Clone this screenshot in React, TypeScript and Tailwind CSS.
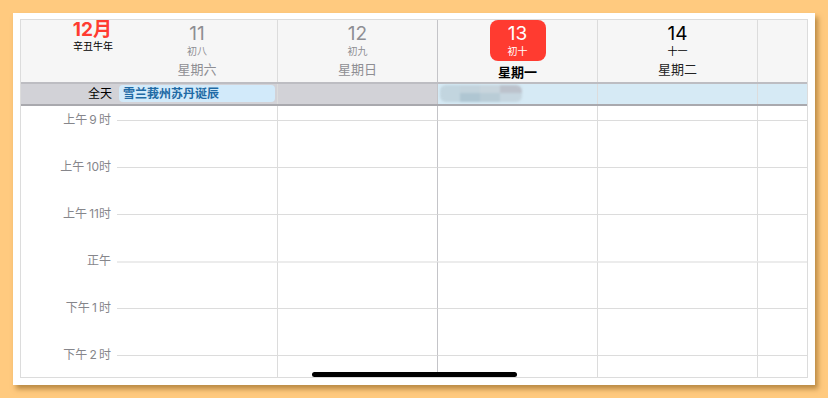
import React from "react";

const FONT = { fontFamily: 'Inter, "Noto Sans CJK SC", "Noto Sans", sans-serif' };

type Day = { n: string; lunar: string; week: string; kind: "past" | "today" | "future" };
const days: Day[] = [
  { n: "11", lunar: "初八", week: "星期六", kind: "past" },
  { n: "12", lunar: "初九", week: "星期日", kind: "past" },
  { n: "13", lunar: "初十", week: "星期一", kind: "today" },
  { n: "14", lunar: "十一", week: "星期二", kind: "future" },
];

const hours = [
  "上午\u20099\u2009时",
  "上午\u200910时",
  "上午\u200911时",
  "正午",
  "下午\u20091\u2009时",
  "下午\u20092\u2009时",
];

function colCls(i: number) {
  if (i === 0) return "w-[160px] shrink-0";
  if (i === 2) return "w-[160px] shrink-0 border-l border-[#c4c4c8]";
  if (i === 4) return "flex-1 border-l border-[#dcdcdc]";
  return "w-[160px] shrink-0 border-l border-[#dcdcdc]";
}

export default function App() {
  return (
    <div className="w-[828px] h-[398px] bg-[#ffca7f] p-[13px]" style={FONT}>
      <div className="relative w-[802px] h-[372px] bg-white pt-[6px] px-[7px] shadow-[3px_4px_5px_rgba(130,85,20,0.55)]">
        <div className="w-[788px] h-[359px] border border-[#dcdcdc] flex flex-col overflow-hidden">
          {/* header */}
          <div className="h-[62px] flex bg-[#f6f6f6] shrink-0">
            <div className="w-[96px] shrink-0 flex flex-col items-end pr-[4px]">
              <div className="text-[#ff3b30] font-bold text-[19px] leading-[20px] pr-[1px]">12月</div>
              <div className="text-[10px] leading-[12px] text-black">辛丑牛年</div>
            </div>
            {[0, 1, 2, 3, 4].map((i) => {
              const d = days[i];
              return (
                <div key={i} className={colCls(i) + " flex flex-col items-center"}>
                  {d && d.kind === "today" && (
                    <>
                      <div className="w-[56px] h-[41px] bg-[#ff3b30] rounded-[8px] flex flex-col items-center">
                        <div className="text-white text-[19px] leading-[20px] mt-[4px]">{d.n}</div>
                        <div className="text-white text-[10px] leading-[12px] mt-[1px]">{d.lunar}</div>
                      </div>
                      <div className="text-black font-bold text-[13px] leading-[16px] mt-[3px]">{d.week}</div>
                    </>
                  )}
                  {d && d.kind !== "today" && (
                    <>
                      <div className={(d.kind === "past" ? "text-[#8e8e93]" : "text-black") + " text-[19px] leading-[20px] mt-[4px]"}>{d.n}</div>
                      <div className={(d.kind === "past" ? "text-[#8e8e93]" : "text-black") + " text-[10px] leading-[12px] mt-[1px]"}>{d.lunar}</div>
                      <div className={(d.kind === "past" ? "text-[#8e8e93]" : "text-[#222]") + " text-[13px] leading-[16px] mt-[4px]"}>{d.week}</div>
                    </>
                  )}
                </div>
              );
            })}
          </div>
          {/* all-day */}
          <div className="h-[24px] flex shrink-0 bg-[#d2d2d7] border-t-2 border-t-[#bdbdc2] border-b-2 border-b-[#a9a9ae]">
            <div className="w-[96px] shrink-0 flex items-center justify-end pr-[5px] text-[12px] text-black">全天</div>
            <div className={colCls(0) + " px-[2px] pt-[1px]"}>
              <div className="h-[17px] rounded-[4px] bg-[#d2eafa] flex items-center px-[4px] text-[12px] font-semibold text-[#1f6aa5] leading-none">
                雪兰莪州苏丹诞辰
              </div>
            </div>
            <div className={colCls(1)}></div>
            <div className={colCls(2) + " bg-[#d6eaf5] pt-[1px]"}>
              <div className="ml-[2px] w-[82px] h-[17px] flex blur-[1.2px] rounded-[6px] overflow-hidden">
                <div className="w-[20px] bg-[#c2d5df]"></div>
                <div className="w-[20px] flex flex-col"><div className="h-[8px] bg-[#c3d3dc]"></div><div className="flex-1 bg-[#afc6d2]"></div></div>
                <div className="w-[20px] flex flex-col"><div className="h-[8px] bg-[#c8d5dd]"></div><div className="flex-1 bg-[#b9ccd6]"></div></div>
                <div className="w-[22px] flex flex-col"><div className="h-[8px] bg-[#bcc2cc]"></div><div className="flex-1 bg-[#c6d6e0]"></div></div>
              </div>
            </div>
            <div className={colCls(3) + " bg-[#d6eaf5]"}></div>
            <div className={colCls(4) + " bg-[#d6eaf5]"}></div>
          </div>
          {/* body */}
          <div className="flex-1 flex flex-col overflow-hidden">
            <div className="h-[14px] flex shrink-0">
              <div className="w-[96px] shrink-0"></div>
              {[0, 1, 2, 3, 4].map((i) => (
                <div key={i} className={colCls(i)}></div>
              ))}
            </div>
            {hours.map((h, r) => (
              <div key={r} className="h-[47px] flex shrink-0">
                <div className="w-[96px] shrink-0 flex justify-end pr-[6px]">
                  <span className="text-[12px] leading-[14px] -mt-[7px] text-[#86868b] whitespace-nowrap">{h}</span>
                </div>
                {[0, 1, 2, 3, 4].map((i) => (
                  <div
                    key={i}
                    className={
                      colCls(i) +
                      (h === "正午" ? " border-t-2 border-t-[#ececec]" : " border-t border-t-[#dcdcdc]")
                    }
                  ></div>
                ))}
              </div>
            ))}
          </div>
        </div>
        <div className="absolute left-[299px] top-[359px] w-[205px] h-[5px] rounded-full bg-black"></div>
      </div>
    </div>
  );
}
